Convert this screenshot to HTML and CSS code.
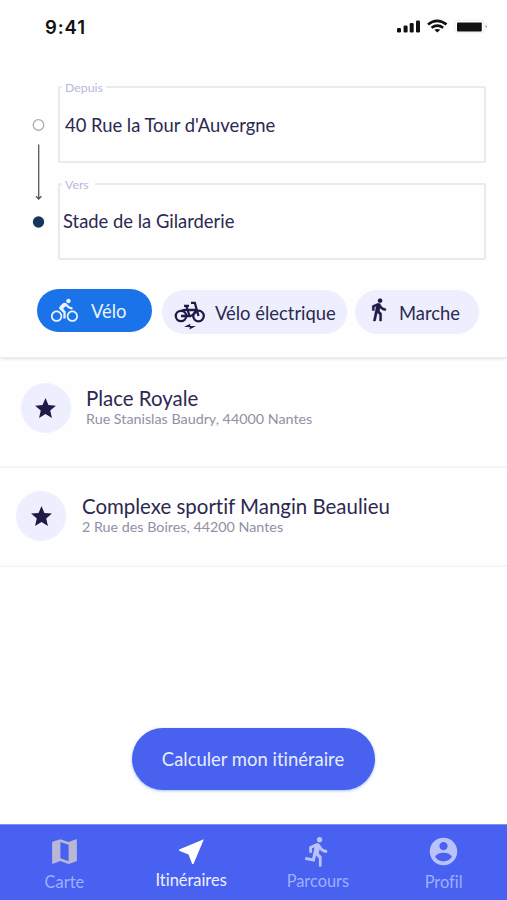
FILE: index.html
```html
<!DOCTYPE html>
<html lang="fr">
<head>
<meta charset="utf-8">
<title>Itinéraires</title>
<link rel="stylesheet" href="styles.css">
</head>
<body>
<div class="app">
  <header class="status">
    <span class="time">9:41</span>
    <svg class="status-icons" width="92" height="20" viewBox="0 0 92 20">
      <rect x="1" y="12" width="4" height="4.500" rx="1.200"/>
      <rect x="7.600" y="9.500" width="4" height="7" rx="1.200"/>
      <rect x="13.700" y="7" width="4" height="9.500" rx="1.200"/>
      <rect x="20" y="4.500" width="4" height="12" rx="1.200"/>
      <g class="waves"><path d="M32 8.400Q41 1.300 50.500 8.400"/><path d="M35.500 11.700Q41.300 7.400 47.200 11.700"/></g>
      <path d="M38.300 13.800Q41.300 12 44.300 13.800L41.300 16.500Z"/>
      <rect class="shell" x="58.800" y="4.200" width="29" height="12.600" rx="3"/>
      <rect x="61" y="6.500" width="24.800" height="9" rx=".8"/>
      <path class="cap" d="M89.500 8.500q3 2 0 4z"/>
    </svg>
  </header>

  <section class="search">
    <div class="trip">
      <svg class="rail" width="16" height="120" viewBox="0 0 16 120">
        <circle class="start" cx="8.500" cy="8" r="5.300"/>
        <path class="line" d="M8.700 27.500V82M6 79.300L8.700 82L11.400 79.300"/>
        <circle class="end" cx="8.500" cy="105" r="5.700"/>
      </svg>
      <div class="fields">
        <fieldset class="field"><legend>Depuis</legend><span class="value from">40 Rue la Tour d'Auvergne</span></fieldset>
        <fieldset class="field"><legend class="short">Vers</legend><span class="value to">Stade de la Gilarderie</span></fieldset>
      </div>
    </div>
    <div class="modes">
      <button class="mode bike active">
        <svg width="27" height="27" viewBox="0 0 24 24"><path d="M15.500 5.500c1.100 0 2-.9 2-2s-.9-2-2-2-2 .9-2 2 .9 2 2 2zM5 12c-2.800 0-5 2.200-5 5s2.200 5 5 5 5-2.200 5-5-2.200-5-5-5zm0 8.500c-1.900 0-3.500-1.600-3.500-3.500s1.600-3.500 3.500-3.500 3.500 1.600 3.500 3.500-1.600 3.500-3.500 3.500zm5.800-10l2.400-2.400.8.8c1.300 1.300 3 2.100 5.100 2.100V9c-1.500 0-2.700-.6-3.600-1.500l-1.900-1.900c-.5-.4-1-.6-1.600-.6s-1.100.2-1.400.6L7.800 8.400c-.4.4-.6.9-.6 1.400 0 .6.2 1.100.6 1.400L11 14v5h2v-6.200l-2.200-2.300zM19 12c-2.800 0-5 2.200-5 5s2.200 5 5 5 5-2.200 5-5-2.200-5-5-5zm0 8.500c-1.900 0-3.500-1.600-3.500-3.500s1.600-3.500 3.500-3.500 3.500 1.600 3.500 3.500-1.600 3.500-3.500 3.500z"/></svg>
        <span>Vélo</span>
      </button>
      <button class="mode ebike">
        <svg width="32" height="30" viewBox="0 0 32 30">
          <g class="frame"><circle cx="7" cy="15" r="5.200"/><circle cx="24.500" cy="15" r="5.300"/><path d="M7 15H16.500Q21 13.500 22.500 9M12.500 5.500L15.500 15M12 9H23M10 4.800H15M17 1.800H20.800L24.500 15M7.500 10Q10 8.500 13 9"/></g>
          <path d="M10 25.800L16.500 22.800L16 24.900H22L15.500 28.500L16 26.200Z"/>
        </svg>
        <span>Vélo électrique</span>
      </button>
      <button class="mode walk">
        <svg width="25" height="25" viewBox="0 0 24 24"><path stroke="currentColor" stroke-width=".4" d="M13.500 5.500c1.100 0 2-.9 2-2s-.9-2-2-2-2 .9-2 2 .9 2 2 2zM9.800 8.900L7 23h2.100l1.800-8 2.100 2v6h2v-7.500l-2.100-2 .6-3C14.800 12 16.800 13 19 13v-2c-1.900 0-3.500-1-4.300-2.400l-1-1.600c-.4-.6-1-1-1.700-1-.3 0-.5.1-.8.1L6 8.300V13h2V9.600l1.800-.7"/></svg>
        <span>Marche</span>
      </button>
    </div>
  </section>

  <ul class="places">
    <li class="place royale">
      <span class="star"><svg width="25" height="25" viewBox="0 0 24 24"><path d="M12 17.270L18.180 21l-1.640-7.030L22 9.240l-7.190-.61L12 2 9.190 8.630 2 9.240l5.460 4.730L5.820 21z"/></svg></span>
      <div class="info"><h2>Place Royale</h2><p>Rue Stanislas Baudry, 44000 Nantes</p></div>
    </li>
    <li class="place mangin">
      <span class="star"><svg width="25" height="25" viewBox="0 0 24 24"><path d="M12 17.270L18.180 21l-1.640-7.030L22 9.240l-7.190-.61L12 2 9.190 8.630 2 9.240l5.460 4.730L5.820 21z"/></svg></span>
      <div class="info"><h2>Complexe sportif Mangin Beaulieu</h2><p>2 Rue des Boires, 44200 Nantes</p></div>
    </li>
  </ul>

  <div class="action"><button class="cta">Calculer mon itinéraire</button></div>

  <nav class="tabs">
    <a class="tab map"><svg width="33" height="33" viewBox="0 0 24 24"><path d="M20.500 3l-.16.030L15 5.100 9 3 3.360 4.900c-.21.070-.36.250-.36.480V20.500c0 .28.220.5.500.5l.16-.030L9 18.900l6 2.100 5.640-1.900c.21-.070.360-.25.360-.48V3.500c0-.28-.22-.5-.5-.5zM15 19l-6-2.110V5l6 2.110V19z"/></svg><span>Carte</span></a>
    <a class="tab current"><svg width="33" height="33" viewBox="0 0 24 24"><path d="M21 3L3 10.530v.98l6.840 2.650L12.480 21h.98L21 3z"/></svg><span>Itinéraires</span></a>
    <a class="tab run"><svg width="33" height="33" viewBox="0 0 24 24"><path d="M13.490 5.480c1.100 0 2-.9 2-2s-.9-2-2-2-2 .9-2 2 .9 2 2 2zm-3.600 13.900l1-4.400 2.100 2v6h2v-7.500l-2.100-2 .6-3c1.300 1.500 3.300 2.500 5.500 2.500v-2c-1.900 0-3.500-1-4.300-2.400l-1-1.600c-.4-.6-1-1-1.700-1-.3 0-.5.1-.8.1l-5.200 2.200v4.700h2v-3.400l1.800-.7-1.600 8.100-4.900-1-.4 2 7 1.400z"/></svg><span>Parcours</span></a>
    <a class="tab profile"><svg width="33" height="33" viewBox="0 0 24 24"><path d="M12 2C6.480 2 2 6.480 2 12s4.480 10 10 10 10-4.480 10-10S17.520 2 12 2zm0 3c1.660 0 3 1.340 3 3s-1.340 3-3 3-3-1.340-3-3 1.340-3 3-3zm0 14.200c-2.500 0-4.710-1.280-6-3.220.030-1.990 4-3.080 6-3.080 1.990 0 5.970 1.090 6 3.080-1.290 1.940-3.500 3.220-6 3.220z"/></svg><span>Profil</span></a>
  </nav>
</div>
</body>
</html>
```
FILE: styles.css
```css
* { box-sizing: border-box; }
body { margin: 0; background: #fefefe; color: #2b2950; font-family: Lato, sans-serif; font-variant-ligatures: none; }
button { border: 0; font: inherit; font-variant-ligatures: none; }
h2, p, ul { margin: 0; padding: 0; }
svg { display: block; flex: none; fill: currentColor; }

.app { width: 507px; height: 900px; display: flex; flex-direction: column; overflow: hidden; }

.status { height: 78px; padding: 16px 15px 0 45px; display: flex; justify-content: space-between; align-items: flex-start; color: #111; }
.time { font: 600 18.500px/22px Inter, sans-serif; letter-spacing: .9px; }
.status-icons { margin-right: 4px; }
.status-icons .waves { fill: none; stroke: currentColor; stroke-width: 2.600; }
.status-icons .shell { fill: #fff; stroke: #eee; }
.status-icons .cap { fill: #aaa; }

.search { height: 280px; border-bottom: 1px solid #ededed; box-shadow: 0 2px 3px -1px rgba(0, 0, 0, .12); }
.trip { display: flex; padding: 1px 21px 0 30px; }
.rail { margin: 38px 11px 0 0; }
.rail .start { fill: #fff; stroke: #aaaaac; stroke-width: 1.200; }
.rail .line { fill: none; stroke: #555562; stroke-width: 1.300; }
.rail .end { fill: #15355f; }
.fields { flex: 1; display: grid; gap: 13px; }
.field { min-width: 0; height: 84px; margin: 0 0 0 1px; padding: 0 0 0 5px; border: 2px solid #e8e9f1; border-radius: 2px; }
.field legend { height: 16px; margin-left: -3px; padding: 0 3px; font-size: 12.300px; line-height: 18px; color: #b4b9dc; }
.field .short { padding-right: 6px; }
.value { display: block; font-size: 18.400px; line-height: 24px; margin-top: 18px; }
.value.to { margin-left: -2px; margin-top: 17px; }

.modes { display: flex; gap: 9px; padding: 29px 0 0 37px; align-items: flex-start; }
.mode { display: flex; align-items: center; height: 44px; margin-top: 1px; padding: 0; border-radius: 22px; background: #eeeffe; color: #2b2950; font-size: 18.400px; white-space: nowrap; }
.mode.active { background: #1a73e8; color: #e9f3ff; height: 43px; margin-top: 0; }
.bike { width: 115px; padding-left: 14px; gap: 13px; margin-right: 1px; }
.ebike { width: 185px; padding-left: 12px; gap: 9px; }
.ebike svg { margin-top: 8px; color: #1e1b46; }
.ebike .frame { fill: none; stroke: currentColor; stroke-width: 2.300; }
.walk { width: 124px; padding-left: 11px; gap: 8px; margin-left: -1px; }
.walk svg { margin-top: -5px; color: #1e1b46; }
.ebike span, .walk span { margin-top: 2px; }

.places { list-style: none; }
.place { display: flex; border-bottom: 2px solid #f4f5fa; }
.royale { height: 110px; padding: 25px 0 0 21px; }
.mangin { height: 99px; padding: 23px 0 0 16px; border-color: #f6f6f8; }
.star { width: 50px; height: 50px; padding-right: 1px; border-radius: 50%; display: grid; place-items: center; background: #eeeffe; color: #1e1b46; }
.mangin .star { padding-right: 0; }
.info { padding: 3px 0 0 15px; }
.info h2 { font-size: 20.450px; line-height: 24px; font-weight: 400; }
.info p { font-size: 14.300px; line-height: 17px; color: #9190a4; }
.mangin .info { padding-left: 16px; }

.action { flex: 1; display: flex; justify-content: center; padding-top: 161px; }
.cta { width: 243px; height: 62px; padding: 0; margin-right: 1px; border-radius: 31px; background: #4861ef; color: #e7ecff; font-size: 18.450px; box-shadow: 0 1px 3px rgba(60, 120, 240, .45); }

.tabs { height: 76px; flex: none; display: grid; grid-template-columns: repeat(4, 1fr); background: #4861f0; border-top: 1px solid #8390e8; }
.tab { display: flex; flex-direction: column; align-items: center; padding: 10px 0 0 2px; color: #b9c3fa; font-size: 16.400px; line-height: 22px; }
.tab span { margin-top: 3px; color: #9fafff; }
.profile { padding-left: 0; }
.map svg { color: #b8b8d6; }
.current svg { color: #fff; }
.current span { color: #edf1ff; margin-top: 1px; }
.run span { margin-top: 2px; }
```
